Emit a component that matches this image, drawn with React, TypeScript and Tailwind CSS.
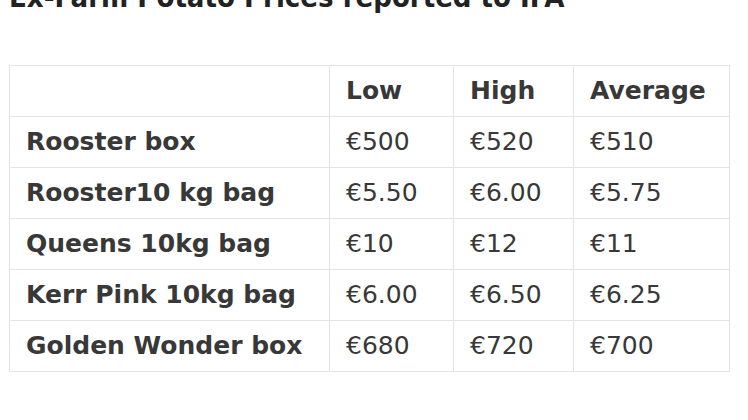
const rows = [
  { name: "Rooster box", low: "€500", high: "€520", avg: "€510" },
  { name: "Rooster10 kg bag", low: "€5.50", high: "€6.00", avg: "€5.75" },
  { name: "Queens 10kg bag", low: "€10", high: "€12", avg: "€11" },
  { name: "Kerr Pink 10kg bag", low: "€6.00", high: "€6.50", avg: "€6.25" },
  { name: "Golden Wonder box", low: "€680", high: "€720", avg: "€700" },
];

const cell = "border border-[#e4e4e4] pl-4 h-[51px] align-middle";

export default function App() {
  return (
    <div className="w-[748px] h-[420px] overflow-hidden bg-white text-[#383838] font-['DejaVu_Sans',Verdana,sans-serif]">
      <h1 className="-mt-[17px] pl-[9px] text-[29px] leading-[28px] font-bold text-[#222] font-['DejaVu_Sans_Condensed','DejaVu_Sans',sans-serif] font-stretch-condensed whitespace-nowrap">
        Ex-Farm Potato Prices reported to IFA
      </h1>
      <table className="ml-[9px] mt-[54px] w-[720px] table-fixed border-collapse text-[25px]">
        <colgroup>
          <col className="w-[320px]" />
          <col className="w-[124px]" />
          <col className="w-[120px]" />
          <col className="w-[156px]" />
        </colgroup>
        <thead>
          <tr>
            <th className={cell}></th>
            <th className={`${cell} text-left font-bold`}>Low</th>
            <th className={`${cell} text-left font-bold`}>High</th>
            <th className={`${cell} text-left font-bold`}>Average</th>
          </tr>
        </thead>
        <tbody>
          {rows.map((r) => (
            <tr key={r.name}>
              <td className={`${cell} font-bold whitespace-nowrap`}>{r.name}</td>
              <td className={cell}>{r.low}</td>
              <td className={cell}>{r.high}</td>
              <td className={cell}>{r.avg}</td>
            </tr>
          ))}
        </tbody>
      </table>
    </div>
  );
}
